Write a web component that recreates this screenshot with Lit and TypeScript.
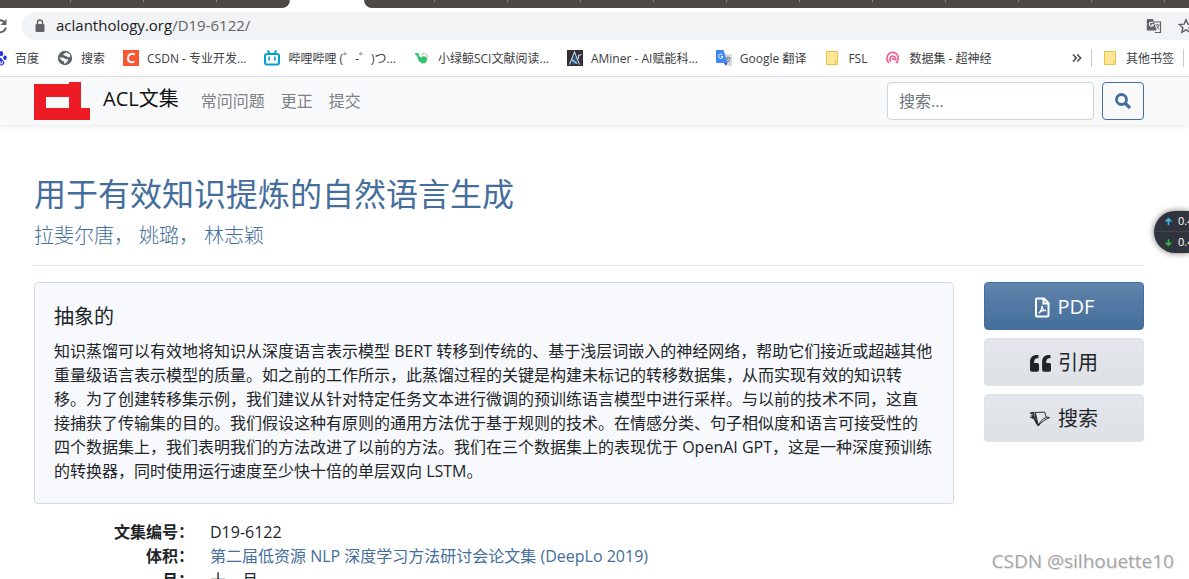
import { LitElement, html, css, svg } from "lit";
import { customElement, property } from "lit/decorators.js";

const icons: Record<string, unknown> = {
  baidu: svg`<g fill="#2932e1"><ellipse cx="2" cy="8" rx="1.8" ry="2.3"/><ellipse cx="6" cy="3.6" rx="1.8" ry="2.6"/><ellipse cx="10.4" cy="3.6" rx="1.8" ry="2.6"/><ellipse cx="14" cy="7.8" rx="1.8" ry="2.3"/><path d="M8 7.4c-2 0-2.600 1.900-4.200 3.300C1.800 12.500 3 15.400 5.400 15.400c1 0 1.500-.3 2.600-.3s1.600.3 2.600.3c2.700 0 3.600-2.900 1.800-4.700C10.800 9.300 10 7.400 8 7.400z"/></g><path d="M6.800 9.500v4.300H5.600c-1.600 0-1.600-2.500 0-2.500h1.200M9 11v2.800h2.300V11" fill="none" stroke="#fff"/>`,
  globe: svg`<circle cx="8" cy="8" r="7.200" fill="#5f6368"/><path d="M9.300 2.200 13 4.600l.3 2.200-2.600.4-1.300-1.400-2.200-.2L6 4.400zM2.200 7.400l4.300.4 2.300 1.400h2.400l-1 2.600-2.600 2.300-.6-2.700-2-.6z" fill="#fff"/>`,
  csdn: svg`<path d="M0 0h16v16H0z" fill="#fc5531"/><path d="M11.800 4.600C8.500 3 5.200 4.100 5 8c-.2 4 2.700 5 6.400 3.600" fill="none" stroke="#fff" stroke-width="2"/>`,
  bili: svg`<path d="m4 1 2 2.500M12 1l-2 2.500" stroke="#00a1d6" stroke-width="1.800" stroke-linecap="round"/><rect x="1" y="4" width="14" height="10.500" rx="2" fill="none" stroke="#00a1d6" stroke-width="2"/><path d="M5.200 7.500v2.200M10.800 7.500v2.200" stroke="#00a1d6" stroke-width="1.800" stroke-linecap="round"/>`,
  whale: svg`<path d="M.3 3.400 2.600 3l2.600.8L5 6l2 1.400L9.500 6l3.300 1.300.2 3-1.600 2.600-3.200.6-3.300-2.200L3 6z" fill="#2dc66d"/><path d="m7.500 5 1.200-1.500 1.500.2M11 3.200l2 2.300v2" fill="none" stroke="#a5abb0"/>`,
  aminer: svg`<path d="M0 0h16v16H0z" fill="#332f37"/><path d="m5 9 3-3 3 3-1 5H5z" fill="#225f91"/><path d="M2.500 14.500 7.500 2l5 12.500M4.500 9.500l5.500 4M11.500 9V5.500l3-1" fill="none" stroke="#cbd3dc" stroke-width="1.100"/>`,
  google: svg`<path d="M7 4h9v12h-4z" fill="#d9dce0"/><path d="M9.500 8h5M12 6.500V8m2 0c-.5 2-2 3.500-3 4M11 9l3 3.500" fill="none" stroke="#6e7880"/><path d="M1 0h6.500l4 13H1a1 1 0 0 1-1-1V1a1 1 0 0 1 1-1z" fill="#4285f4"/><path d="M8 13h3.500L10 16z" fill="#2859c5"/><path d="M6.600 4.900a2.200 2.200 0 1 0 .4 1.800H5" fill="none" stroke="#fff"/>`,
  folder: svg`<path d="M2.500 1.500h11v9.800l-1.200 1.200v2h-9.800z" fill="#ffe694" stroke="#e6c445"/><path d="M11.500 11h2v3.500h-2z" fill="#ffe694" stroke="#e6c445"/>`,
  hyper: svg`<path d="M3.800 13C1.200 10.500 1.200 6 4 3.700c2.600-2 6.600-1.600 8.400 1.200 1.400 2.500.9 6-1.200 8.100M5.800 11.500C4.300 9 5 6.600 7.300 6.200c2.500-.3 3.800 1.900 3.300 4.300M7.600 9.700c.2-1.500 1.200-1.200 1.900.5" fill="none" stroke="#f0669a" stroke-width="1.800"/>`,
  reload: svg`<path d="M13.200 5A6 6 0 1 0 14 9.500" fill="none" stroke="#5f6368" stroke-width="2"/><path d="M14.500 1v6h-6z" fill="#5f6368"/>`,
  lock: svg`<rect x="3.500" y="6" width="9" height="8" rx="1" fill="#5f6368"/><path d="M5.500 6.500V4.600a2.500 2.500 0 0 1 5 0v1.900" fill="none" stroke="#5f6368" stroke-width="1.500"/>`,
  translate: svg`<path d="M8 4h6.500v10.500H9" fill="none" stroke="#5f6368" stroke-width="1.200"/><path d="M1.800 1H7l3.500 11.500h-9a.7.700 0 0 1-.7-.7V1.800A1 1 0 0 1 1.800 1z" fill="#5f6368"/><path d="M7 5a2 2 0 1 0 .3 1.800H5.500" fill="none" stroke="#fff" stroke-width="1.100"/><path d="M9.500 7h4M11.500 6v1m1.300 0c-.3 2-1.300 3-2.300 3.700M10.400 8l2.600 3.500" fill="none" stroke="#5f6368" stroke-width=".9"/>`,
  star: svg`<path d="m8 1.700 1.900 4.400 4.800.4-3.600 3.200 1.100 4.700L8 11.900l-4.200 2.500 1.100-4.700-3.600-3.200 4.800-.4z" fill="none" stroke="#5f6368" stroke-width="1.400"/>`,
  more: svg`<path d="m4 4.500 3.300 3.500L4 11.500M8.300 4.500l3.300 3.500-3.300 3.500" fill="none" stroke="#4d5156" stroke-width="1.700"/>`,
  search: svg`<circle cx="6.500" cy="6.500" r="5" fill="none" stroke="#446e9b" stroke-width="2.800"/><path d="m10 10 5 5" stroke="#446e9b" stroke-width="3.200"/>`,
  pdf: svg`<path d="M3 1h7l4.500 4.500V18a1 1 0 0 1-1 1H3a1 1 0 0 1-1-1V2a1 1 0 0 1 1-1zM9.500 1v5h5" fill="none" stroke="currentColor" stroke-width="2"/><path d="M4.800 15.500c1.200-.3 3.700-4.500 3.200-7 .4 3 2.300 4.700 4 4.500-2.500-.5-5 .5-7.200 2.500z" fill="none" stroke="currentColor" stroke-width="1.400"/>`,
  quote: svg`<path d="M8 2H6.500C2.500 2 0 4.500 0 8.500V16a1.800 1.800 0 0 0 1.800 1.800h5A1.800 1.800 0 0 0 8.600 16v-4.600a1.800 1.800 0 0 0-1.800-1.800H4V8.500C4 6.500 5 5 7 5h1zM19.500 2H18c-4 0-6.500 2.500-6.500 6.500V16a1.800 1.800 0 0 0 1.800 1.800h5a1.800 1.800 0 0 0 1.800-1.800v-4.600a1.800 1.800 0 0 0-1.800-1.800h-2.800V8.500c0-2 1-3.500 3-3.500h1z" fill="currentColor"/>`,
  scholar: svg`<path d="M5 3.300 14 3l1.500 5.200c-3.500.8-6 3.800-7.500 7.800zM8 16c2.500-3.500 6.500-6 10.800-7.800l-3.300-.6" fill="none" stroke="currentColor" stroke-width=".9"/><path d="M5 3.300C4.600 8 6 12 8 16M3.200 4.200C3.500 8.500 5 12.500 8 16M1.500 5.500l2 3.200M0 7.500l4.500 2M4 3.200l-3.500.6 2.500 1" fill="none" stroke="currentColor" stroke-width="1.100"/>`,
  up: svg`<path d="M8 14V3M3 8l5-5 5 5" fill="none" stroke="#3fb4f5" stroke-width="3"/>`,
  down: svg`<path d="M8 2v11M3 8l5 5 5-5" fill="none" stroke="#35b54a" stroke-width="3"/>`,
};

@customElement("ui-icon")
class UiIcon extends LitElement {
  static styles = css`
    :host { display: block; flex: none; width: 16px; height: 16px; }
    svg { display: block; width: 100%; height: 100%; }
  `;
  @property() name = "";
  @property() box = "0 0 16 16";
  render() {
    return html`<svg viewBox=${this.box} aria-hidden="true">${icons[this.name]}</svg>`;
  }
}

@customElement("browser-chrome")
class BrowserChrome extends LitElement {
  static styles = css`
    :host { display: block; background: #fff; border-bottom: 1px solid #dadce0; }
    .tabs { display: flex; height: 8px; background: #fff; }
    .left { width: 290px; border-radius: 0 0 8px 0; background: #4b4845; }
    .right { flex: 1; margin-left: 74px; border-radius: 0 0 0 8px; background: #4b4845; }
    .ticks { height: 2px; margin-left: 70px; background: repeating-linear-gradient(90deg, #8b8986 0 1px, transparent 1px 73px); }
    .bar { display: flex; align-items: center; height: 28px; margin-top: 4px; }
    .reload { display: block; flex: none; width: 22px; padding: 0; border: 0; background: none; }
    .reload ui-icon { margin-left: -8px; }
    .address { flex: 1; display: flex; align-items: center; height: 28px; padding: 0 0 0 10px; border-radius: 14px 0 0 14px; background: #f1f3f4; overflow: hidden; }
    .url { flex: 1; margin-left: 8px; padding-bottom: 2px; color: #5f6368; font-size: 15px; line-height: 20px; }
    .host { color: #202124; }
    .star { margin: 0 -5px 0 16px; }
    .marks { display: flex; align-items: center; height: 36px; padding-right: 5px; font-size: 12px; line-height: 16px; color: #3c4043; overflow: hidden; }
    .list { display: flex; flex: 1; gap: 18px; margin-left: -9px; }
    a { display: flex; align-items: center; gap: 8px; color: inherit; text-decoration: none; white-space: nowrap; }
    .label { padding-top: 2px; }
    .more { margin: 0 6px; padding: 0; border: 0; background: none; }
    .other { padding: 0 9px 0 10px; border: solid #c8cacd; border-width: 0 1px; }
  `;
  render() {
    const marks = [
      ["baidu", "百度"], ["globe", "搜索"], ["csdn", "CSDN - 专业开发..."],
      ["bili", "哔哩哔哩 (゜-゜)つ..."], ["whale", "小绿鲸SCI文献阅读..."],
      ["aminer", "AMiner - AI赋能科..."], ["google", "Google 翻译"],
      ["folder", "FSL"], ["hyper", "数据集 - 超神经"],
    ];
    return html`
      <div class="tabs"><div class="left"><div class="ticks"></div></div><div class="right"><div class="ticks"></div></div></div>
      <div class="bar">
        <button class="reload" aria-label="Reload"><ui-icon name="reload"></ui-icon></button>
        <div class="address">
          <ui-icon name="lock"></ui-icon>
          <div class="url"><span class="host">aclanthology.org</span>/D19-6122/</div>
          <ui-icon name="translate"></ui-icon><ui-icon class="star" name="star"></ui-icon>
        </div>
      </div>
      <nav class="marks">
        <div class="list">${marks.map(([icon, label]) => html`<a href="#"><ui-icon name=${icon}></ui-icon><span class="label">${label}</span></a>`)}</div>
        <button class="more" aria-label="More bookmarks"><ui-icon name="more"></ui-icon></button>
        <a class="other" href="#"><ui-icon name="folder"></ui-icon><span class="label">其他书签</span></a>
      </nav>`;
  }
}

@customElement("site-header")
class SiteHeader extends LitElement {
  static styles = css`
    :host { display: flex; align-items: center; padding: 5px 45px 5px 34px; background: linear-gradient(#f9fafc, #f8f9fa); box-shadow: 0 2px 4px rgba(0, 0, 0, 0.075); }
    a { text-decoration: none; }
    .brand { display: flex; align-items: center; gap: 13px; color: #111; font-size: 20px; line-height: 30px; }
    .logo { display: block; width: 56px; height: 38px; }
    .name { padding-bottom: 4px; }
    .links { flex: 1; display: flex; gap: 16px; margin-left: 22px; font-size: 16px; line-height: 24px; }
    .links a { color: #808184; }
    form { display: flex; gap: 8px; }
    input { box-sizing: border-box; width: 207px; height: 38px; padding: 6px 11px; border: 1px solid #ced4da; border-radius: 4px; background: #fff; color: #495057; font: inherit; font-size: 16px; }
    input::placeholder { color: #6c757d; opacity: 1; }
    button { display: grid; place-items: center; width: 42px; height: 38px; padding: 0; border: 1px solid #446e9b; border-radius: 4px; background: transparent; }
  `;
  render() {
    return html`
      <a class="brand" href="#">
        <svg class="logo" viewBox="0 0 56 38" aria-hidden="true"><path d="M0 2h35V0h12v26h9v12H0zM12 15v11h23V15z" fill="#ed1c24" fill-rule="evenodd"/></svg>
        <span class="name">ACL文集</span>
      </a>
      <nav class="links"><a href="#">常问问题</a><a href="#">更正</a><a href="#">提交</a></nav>
      <form @submit=${(e: Event) => e.preventDefault()}>
        <input type="search" aria-label="搜索" placeholder="搜索..." />
        <button aria-label="搜索"><ui-icon name="search"></ui-icon></button>
      </form>`;
  }
}

@customElement("paper-page")
class PaperPage extends LitElement {
  static styles = css`
    :host { display: block; padding: 49px 45px 0 34px; }
    a { color: #446e9b; text-decoration: none; }
    h2 { margin: 0; font-size: 32px; line-height: 40px; font-weight: 400; }
    .authors { margin: 0; padding: 6px 0 13px; border-bottom: 1px solid #e4e5e6; color: #6c757d; font-size: 20px; font-weight: 300; line-height: 32px; }
    .authors a + a { margin-left: 5px; }
    .cols { display: grid; grid-template-columns: minmax(0, 1fr) 160px; gap: 30px; margin-top: 16px; }
    .card { padding: 20px 20px 20px 19px; border: 1px solid #d7dadd; border-radius: 4px; background: #f8f9fc; }
    h5 { margin: 0 0 8px; font-size: 20px; line-height: 28px; font-weight: 400; }
    .card p { margin: 0; line-height: 24px; }
    dl { display: grid; grid-template-columns: 160px 1fr; column-gap: 16px; margin: 16px 0 0; line-height: 24px; }
    dt { text-align: right; font-weight: 700; }
    dd { margin: 0; }
    .actions { display: flex; flex-direction: column; gap: 8px; }
    .btn { box-sizing: border-box; display: flex; align-items: center; justify-content: center; gap: 7px; width: 100%; height: 48px; padding: 2px 0 0; border: 1px solid #dee2e6; border-radius: 4px; background: linear-gradient(#e3e6ea, #dee2e6); color: #212529; font: inherit; font-size: 20px; line-height: 30px; }
    .btn ui-icon { width: 21px; height: 21px; }
    .btn .file { width: 17px; }
    .primary { border-color: #446e9b; background: linear-gradient(#6084ab, #446e9b); color: #fff; }
  `;
  render() {
    return html`
      <h2><a href="#">用于有效知识提炼的自然语言生成</a></h2>
      <p class="authors"><a href="#">拉斐尔唐，</a><a href="#">姚璐，</a><a href="#">林志颖</a></p>
      <div class="cols">
        <div>
          <section class="card">
            <h5>抽象的</h5>
            <p>知识蒸馏可以有效地将知识从深度语言表示模型 BERT 转移到传统的、基于浅层词嵌入的神经网络，帮助它们接近或超越其他重量级语言表示模型的质量。如之前的工作所示，此蒸馏过程的关键是构建未标记的转移数据集，从而实现有效的知识转移。为了创建转移集示例，我们建议从针对特定任务文本进行微调的预训练语言模型中进行采样。与以前的技术不同，这直接捕获了传输集的目的。我们假设这种有原则的通用方法优于基于规则的技术。在情感分类、句子相似度和语言可接受性的四个数据集上，我们表明我们的方法改进了以前的方法。我们在三个数据集上的表现优于 OpenAI GPT，这是一种深度预训练的转换器，同时使用运行速度至少快十倍的单层双向 LSTM。</p>
          </section>
          <dl>
            <dt>文集编号：</dt><dd>D19-6122</dd>
            <dt>体积：</dt><dd><a href="#">第二届低资源 NLP 深度学习方法研讨会论文集 (DeepLo 2019)</a></dd>
            <dt>月：</dt><dd>十一月</dd>
          </dl>
        </div>
        <div class="actions">
          <a class="btn primary" href="#"><ui-icon class="file" name="pdf" box="0 0 17 20"></ui-icon>PDF</a>
          <button class="btn"><ui-icon name="quote" box="0 0 20 20"></ui-icon>引用</button>
          <a class="btn" href="#"><ui-icon name="scholar" box="0 0 20 20"></ui-icon>搜索</a>
        </div>
      </div>`;
  }
}

@customElement("app-root")
class AppRoot extends LitElement {
  static styles = css`
    :host { display: block; position: relative; height: 100vh; overflow: hidden; background: #fff; color: #212529; font: 400 16px/24px "Open Sans", "Noto Sans CJK SC", sans-serif; }
    .meter { position: absolute; top: 211px; right: 0; box-sizing: border-box; width: 35px; height: 42px; border-radius: 21px 0 0 21px; background: #30343d; box-shadow: 0 0 6px rgba(0, 0, 0, 0.55); color: #fff; font-size: 11px; line-height: 20px; overflow: hidden; }
    .rate { display: flex; align-items: center; gap: 5px; padding-left: 10px; white-space: nowrap; }
    .rate + .rate { border-top: 1px solid #3e424b; }
    .rate ui-icon { width: 9px; height: 9px; }
    .mark { position: absolute; right: 15px; bottom: 4px; color: #a6a6a6; font-size: 19px; line-height: 28px; text-shadow: 1px 1px 0 #e6e6e6; }
  `;
  render() {
    return html`
      <browser-chrome lang="zh-CN"></browser-chrome>
      <site-header lang="zh-CN"></site-header>
      <paper-page lang="zh-CN"></paper-page>
      <div class="meter">
        <div class="rate"><ui-icon name="up"></ui-icon>0.4</div>
        <div class="rate"><ui-icon name="down"></ui-icon>0.4</div>
      </div>
      <div class="mark">CSDN @silhouette10</div>`;
  }
}
